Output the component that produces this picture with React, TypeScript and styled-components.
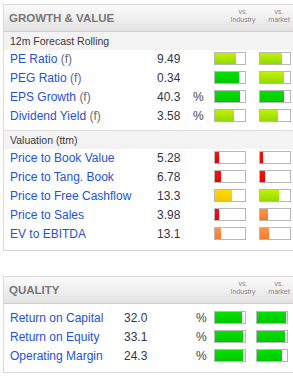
import styled, { createGlobalStyle } from "styled-components";

type Tone = "lime" | "green" | "red" | "orange" | "yellow";

type Metric = {
  label: string;
  note?: string;
  value: string;
  unit?: string;
  industry: [Tone, number];
  market: [Tone, number];
};

const forecast: Metric[] = [
  { label: "PE Ratio", note: "(f)", value: "9.49", industry: ["lime", 21], market: ["lime", 22] },
  { label: "PEG Ratio", note: "(f)", value: "0.34", industry: ["green", 24], market: ["lime", 24] },
  { label: "EPS Growth", note: "(f)", value: "40.3", unit: "%", industry: ["green", 25], market: ["green", 24] },
  { label: "Dividend Yield", note: "(f)", value: "3.58", unit: "%", industry: ["lime", 19], market: ["lime", 18] },
];

const valuation: Metric[] = [
  { label: "Price to Book Value", value: "5.28", industry: ["red", 4], market: ["red", 3] },
  { label: "Price to Tang. Book", value: "6.78", industry: ["red", 6], market: ["red", 5] },
  { label: "Price to Free Cashflow", value: "13.3", industry: ["yellow", 17], market: ["lime", 19] },
  { label: "Price to Sales", value: "3.98", industry: ["red", 4], market: ["orange", 8] },
  { label: "EV to EBITDA", value: "13.1", industry: ["orange", 6], market: ["orange", 9] },
];

const quality: Metric[] = [
  { label: "Return on Capital", value: "32.0", unit: "%", industry: ["green", 27], market: ["green", 29] },
  { label: "Return on Equity", value: "33.1", unit: "%", industry: ["green", 28], market: ["green", 28] },
  { label: "Operating Margin", value: "24.3", unit: "%", industry: ["green", 28], market: ["green", 25] },
];

const tones: Record<Tone, [string, string]> = {
  lime: ["#c4f000", "#8edc00"],
  green: ["#00e400", "#00c600"],
  red: ["#ff1010", "#e80000"],
  orange: ["#ff9448", "#f47a2a"],
  yellow: ["#ffdc00", "#f7c400"],
};

const GROWTH_COLS = "147px 36px 21px 32px 13px 32px";
const QUALITY_COLS = "114px 72px 18px 32px 10px 32px";

function Bar({ tone, fill }: { tone: Tone; fill: number }) {
  return (
    <BarBox>
      <BarFill $tone={tone} style={{ width: fill }} />
    </BarBox>
  );
}

function Rows({ items, cols }: { items: Metric[]; cols: string }) {
  return (
    <>
      {items.map((m) => (
        <Row key={m.label} $cols={cols}>
          <Label>
            {m.label}
            {m.note && <Note> {m.note}</Note>}
          </Label>
          <Value>{m.value}</Value>
          <Unit>{m.unit}</Unit>
          <Bar tone={m.industry[0]} fill={m.industry[1]} />
          <span />
          <Bar tone={m.market[0]} fill={m.market[1]} />
        </Row>
      ))}
    </>
  );
}

function PanelHead({ title }: { title: string }) {
  return (
    <Header>
      <Title>{title}</Title>
      <VsLabel>
        vs.
        <br />
        Industry
      </VsLabel>
      <span />
      <VsLabel>
        vs.
        <br />
        market
      </VsLabel>
    </Header>
  );
}

export default function App() {
  return (
    <Page>
      <GlobalStyle />
      <Panel>
        <PanelHead title="GROWTH & VALUE" />
        <Section>
          <SubHeader>12m Forecast Rolling</SubHeader>
          <Rows items={forecast} cols={GROWTH_COLS} />
        </Section>
        <Section $last>
          <SubHeader $bordered>Valuation (ttm)</SubHeader>
          <Rows items={valuation} cols={GROWTH_COLS} />
        </Section>
      </Panel>

      <Panel>
        <PanelHead title="QUALITY" />
        <QualityBody>
          <Rows items={quality} cols={QUALITY_COLS} />
        </QualityBody>
      </Panel>
    </Page>
  );
}

const GlobalStyle = createGlobalStyle`
  body {
    margin: 0;
    background: #fff;
    overflow: hidden;
    font-family: "Liberation Sans", Arial, sans-serif;
  }
`;

const Page = styled.div`
  display: flex;
  flex-direction: column;
  gap: 25px;
  padding: 4px 0 0 3px;
`;

const Panel = styled.div`
  width: 300px;
  border: 1px solid #d9d9d9;
  background: #fff;
`;

const Header = styled.div`
  display: grid;
  grid-template-columns: 221px 26px 11px 24px;
  height: 26px;
  padding-left: 5px;
  background: linear-gradient(#fbfbfb, #e3e3e3);
  border-bottom: 1px solid #cfcfcf;
`;

const Title = styled.div`
  align-self: center;
  font-size: 11.5px;
  font-weight: bold;
  color: #787878;
`;

const VsLabel = styled.div`
  padding-top: 3px;
  font-family: "Liberation Sans", Arial, sans-serif;
  font-size: 7px;
  line-height: 7.5px;
  color: #8a8a8a;
  text-align: center;
`;

const Section = styled.div<{ $last?: boolean }>`
  padding-bottom: ${(p) => (p.$last ? "6px" : "4px")};
`;

const SubHeader = styled.div<{ $bordered?: boolean }>`
  height: 18px;
  line-height: 18px;
  padding-left: 6px;
  background: #f3f3f3;
  border-top: ${(p) => (p.$bordered ? "1px solid #dcdcdc" : "none")};
  font-size: 10.5px;
  color: #3a3a3a;
`;

const QualityBody = styled.div`
  padding: 5px 0 6px;
`;

const Row = styled.div<{ $cols: string }>`
  display: grid;
  grid-template-columns: ${(p) => p.$cols};
  height: 19px;
  padding-left: 6px;
  font-size: 12px;
  line-height: 19px;
`;

const Label = styled.span`
  color: #2552d0;
  white-space: nowrap;
`;

const Note = styled.span`
  color: #6a6a7a;
`;

const Value = styled.span`
  color: #353545;
`;

const Unit = styled.span`
  color: #444;
`;

const BarBox = styled.div`
  box-sizing: border-box;
  align-self: start;
  margin-top: 2px;
  width: 32px;
  height: 13px;
  border: 1px solid #b8b8b8;
  background: #fff;
`;

const BarFill = styled.div<{ $tone: Tone }>`
  height: 100%;
  background: linear-gradient(
    ${(p) => tones[p.$tone][0]},
    ${(p) => tones[p.$tone][1]}
  );
`;
